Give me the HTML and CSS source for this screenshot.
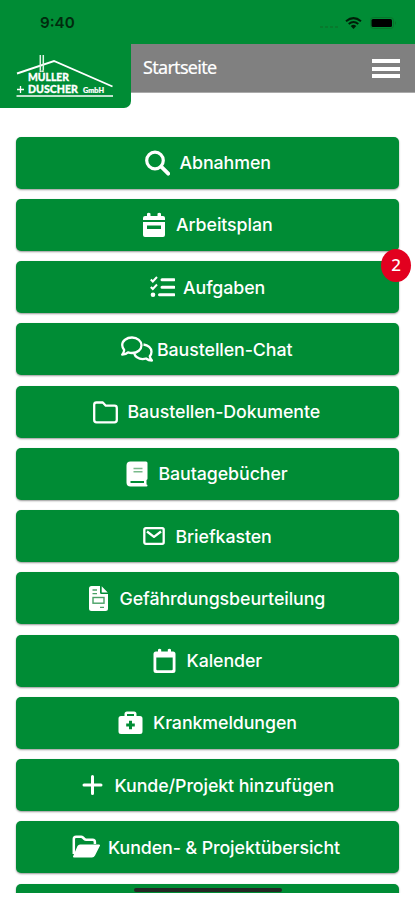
FILE: index.html
```html
<!DOCTYPE html>
<html lang="de">
<head>
<meta charset="utf-8">
<meta name="viewport" content="width=device-width, initial-scale=1">
<title>Startseite</title>
<link rel="stylesheet" href="styles.css">
</head>
<body>
<div class="screen">
  <div class="status">
    <span class="time">9:40</span>
    <div class="signals">
      <div class="dots"><i></i><i></i><i></i><i></i></div>
      <svg class="wifi" width="17" height="12" viewBox="0 0 17 12" fill="none" stroke="#001f08" stroke-width="2"><path d="M1 4.2Q8.500-2 16 4.200M3.700 7Q8.500 3 13.300 7"/><path d="M5.700 9Q8.500 6.700 11.300 9L8.500 12Z" fill="#001f08" stroke="none"/></svg>
      <svg width="27" height="13" viewBox="0 0 27 13"><rect x=".5" y=".5" width="23" height="11" rx="3" fill="none" stroke="#08752a"/><rect x="1.500" y="2" width="20.500" height="8" rx="1.500" fill="#000"/><path d="M25 4q2 2 0 4z" fill="#08752a"/></svg>
    </div>
  </div>
  <header class="header">
    <div class="logo">
      <svg width="131" height="64" viewBox="0 0 131 64">
        <path d="M17 29.500L54 17L112.500 42.500" fill="none" stroke="#fff" stroke-width="1.900"/>
        <path d="M40.300 11v15.500M43.300 11v15.500" stroke="#dff5e5" stroke-width="1.500"/>
        <path d="M16.500 52h96.500" stroke="#fff" stroke-width="1.500"/>
        <text class="logo-text" x="28" y="37.200" textLength="41" lengthAdjust="spacingAndGlyphs">MÜLLER</text>
        <text class="logo-text" x="28" y="49" textLength="50" lengthAdjust="spacingAndGlyphs">DUSCHER</text>
        <text class="logo-small" x="83" y="48.500" textLength="21" lengthAdjust="spacingAndGlyphs">GmbH</text>
        <path d="M17 45.500h7M20.500 42v7" stroke="#fff" stroke-width="1.300"/>
      </svg>
    </div>
    <div class="bar">
      <span class="title">Startseite</span>
      <div class="burger"><i></i><i></i><i></i></div>
    </div>
  </header>
  <main class="menu">
    <a class="item"><svg class="gap-m" width="25" height="26" viewBox="0 0 25 26" fill="none" stroke="#fff"><circle cx="10" cy="10.500" r="8.300" stroke-width="3.200"/><path d="M16.200 16.700l7 7" stroke-width="3.800" stroke-linecap="round"/></svg><span class="w-90">Abnahmen</span></a>
    <a class="item"><svg class="gap-m" width="24" height="26" viewBox="0 0 24 26"><path fill="#fff" fill-rule="evenodd" d="M5 1.500q1.800-1.500 3.500 0V4h7V1.500q1.800-1.500 3.500 0V4h2q2 0 2 2v2H1V6q0-2 2-2h2zM1 10h22v13q0 2-2 2H3q-2 0-2-2zM5 13.500v3.500h14v-3.500z"/></svg><span class="w-96">Arbeitsplan</span></a>
    <a class="item"><svg class="gap-s" width="25" height="24" viewBox="0 0 25 24" fill="none" stroke="#fff"><path d="M.8 4.500l2 2L7 2M.8 12l2 2L7 9.500" stroke-width="2"/><path d="M12 4.700h12M12 12.200h12M9.500 19.700h14.500" stroke-width="3" stroke-linecap="round"/><circle cx="3" cy="19.700" r="2.300" fill="#fff" stroke="none"/></svg><span class="w-81">Aufgaben</span><b class="badge">2</b></a>
    <a class="item"><svg class="gap-xs" width="32" height="26" viewBox="0 0 32 26" fill="none" stroke="#fff" stroke-width="2.300" stroke-linejoin="round"><path d="M11 1.500c5.500 0 9.500 3.500 9.500 7.800s-4 7.700-9.500 7.700q-2 0-4-.7Q4.500 18.700 1.200 18.700Q3 16.500 3.200 14Q1.200 11.500 1.200 9C1.200 5 5.500 1.500 11 1.500z"/><path d="M22.500 8.500c4.500.5 8 3.500 8 7.300q0 2.500-1.700 4.500q.4 2.300 2.200 4.200-3.500 0-6-2-5 1.500-9-1.200-2-1.400-2.700-3.500"/></svg><span class="w-136">Baustellen-Chat</span></a>
    <a class="item"><svg class="gap-m" width="25" height="24" viewBox="0 0 25 24" fill="none" stroke="#fff" stroke-width="2.300" stroke-linejoin="round"><path d="M3.500 2.500h6.300l3 3.200h8.700q2.300 0 2.300 2.300v12q0 2.300-2.300 2.300h-18q-2.300 0-2.300-2.300V4.800q0-2.300 2.300-2.300z"/></svg><span class="w-194">Baustellen-Dokumente</span></a>
    <a class="item"><svg class="gap-l" width="22" height="26" viewBox="0 0 22 26"><path fill="#fff" d="M4.500.5H20q1.500 0 1.500 1.500v15.500q0 1-1 1.500v4.500q1 0 1 1t-1 1h-16Q.5 25.500.5 21.500v-17q0-4 4-4z"/><path d="M7.500 7.500h9M7.500 10.800h9" stroke="#79ba8b" stroke-width="1.500"/><path d="M4.500 21h13.500" stroke="#008c35" stroke-width="2"/></svg><span class="w-130">Bautagebücher</span></a>
    <a class="item"><svg class="gap-l" width="22" height="18" viewBox="0 0 22 18" fill="none" stroke="#fff" stroke-width="2.300" stroke-linejoin="round"><rect x="1.300" y="1.200" width="19.400" height="15.600" rx="1.500"/><path d="M4 4.500l7 5.300 7-5.300"/></svg><span class="w-96">Briefkasten</span></a>
    <a class="item"><svg class="gap-xl" width="19" height="25" viewBox="0 0 19 25"><path fill="#fff" d="M2.500 0H11v6.500q0 1.500 1.500 1.500H19v14.500q0 2.500-2.500 2.500h-14Q0 25 0 22.500v-20Q0 0 2.500 0zM12.700.3L18.700 6.500h-6z"/><path d="M3.500 4h4.500M3.500 7.700h4.500M11 21.300h4" stroke="#48a065" stroke-width="1.300"/><rect x="4" y="11.500" width="11" height="5.700" fill="none" stroke="#48a065" stroke-width="1.400"/></svg><span class="w-206">Gefährdungsbeurteilung</span></a>
    <a class="item"><svg class="gap-l" width="23" height="26" viewBox="0 0 23 26"><path fill="#fff" fill-rule="evenodd" d="M5 1.500q1.600-1.500 3.200 0V3.500h6.600V1.500q1.600-1.500 3.200 0V3.500h2q2.500 0 2.500 2.500v16.500q0 2.500-2.500 2.500H3Q.5 25 .5 22.500V6Q.5 3.500 3 3.500h2zM3.300 9.500v11.700q0 1 1 1h14.400q1 0 1-1V9.500z"/></svg><span class="w-75">Kalender</span></a>
    <a class="item"><svg class="gap-m" width="25" height="24" viewBox="0 0 25 24"><path fill="#fff" fill-rule="evenodd" d="M6.500 5V3q0-2.500 2.500-2.500h7q2.500 0 2.500 2.500v2h3.500q2.500 0 2.500 2.500v13q0 2.500-2.500 2.500H3Q.5 23 .5 20.500v-13Q.5 5 3 5zM9 3v2h7V3z"/><path d="M12.500 9.700v8.600M8.200 14h8.600" stroke="#008c35" stroke-width="3"/></svg><span class="w-143">Krankmeldungen</span></a>
    <a class="item"><svg class="gap-xl" width="21" height="22" viewBox="0 0 21 22" fill="none" stroke="#fff" stroke-width="3" stroke-linecap="round"><path d="M10.500 2.500v17M2 11h17"/></svg><span class="w-218">Kunde/Projekt hinzufügen</span></a>
    <a class="item"><svg class="gap-s" width="28" height="24" viewBox="0 0 28 24"><path d="M1.800 19V4q0-2.300 2.300-2.300h5q1 0 1.800.8l1.500 1.500q.7.700 1.700.7h6.500q2.300 0 2.300 2.300v2" fill="none" stroke="#fff" stroke-width="2.500"/><path d="M8 9.500h19q1.500 0 .8 1.500l-4.800 9.500Q22 22.500 20 22.500H2q-1.500 0-.8-1.500L5.500 11Q6.300 9.500 8 9.500z" fill="#fff"/></svg><span class="w-234">Kunden- &amp; Projektübersicht</span></a>
    <a class="item"></a>
  </main>
  <div class="home"><i></i></div>
</div>
</body>
</html>
```
FILE: styles.css
```css
* { box-sizing: border-box; }
body { margin: 0; background: #fff; font-family: Inter, sans-serif; }
i { display: block; }
.screen { position: relative; width: 415px; height: 900px; overflow: hidden; }
.status { display: flex; justify-content: space-between; height: 44px; padding: 0 18px 0 40px; background: #008c35; }
.time { padding-top: 13px; font-size: 15.2px; line-height: 20px; font-weight: 600; color: #002b0e; }
.signals { display: flex; align-items: flex-start; padding-top: 17px; }
.wifi { margin: 0 8px 0 7px; }
.dots { display: flex; gap: 2px; padding-top: 9px; }
.dots i { width: 3px; height: 2px; background: #087a2d; }
.header { display: flex; align-items: flex-start; height: 64px; }
.logo { width: 131px; height: 64px; background: #008c35; border-radius: 0 0 7px 0; }
.logo svg { display: block; }
.logo-text { font: 900 11.5px Lato, sans-serif; fill: #fff; stroke: #fff; stroke-width: .3px; }
.logo-small { font: 900 6.5px Lato, sans-serif; fill: #fff; stroke: #fff; stroke-width: .2px; }
.bar { flex: 1; height: 49px; display: flex; justify-content: space-between; padding: 0 15px 0 12px; background: #808080; border-bottom: 1px solid #aaa; }
.title { padding-top: 11px; font: 18px/24px "Noto Sans", sans-serif; letter-spacing: -.7px; color: #fff; -webkit-text-stroke: .2px #fff; }
.burger { display: flex; flex-direction: column; gap: 3.5px; padding-top: 15px; }
.burger i { width: 28px; height: 4px; background: #fff; }
.menu { display: flex; flex-direction: column; gap: 10.27px; height: 785px; margin: 0 16px; padding-top: 28.5px; overflow: visible; }
.item { position: relative; flex: 0 0 52px; display: flex; align-items: center; justify-content: center; padding-right: 1px; border-radius: 5px; background: #008c35; box-shadow: 0 1px 2px rgba(0, 0, 0, .4); color: #fff; font-size: 17.8px; line-height: 24px; font-weight: 500; letter-spacing: -.08px; white-space: nowrap; }
.item span { padding-top: 1px; }
.item svg { flex: none; }
.gap-xs { margin-right: 4px; }
.gap-s { margin-right: 8px; }
.gap-m { margin-right: 10px; }
.gap-l { margin-right: 11px; }
.gap-xl { margin-right: 12px; }
.w-75 { width: 75px; }
.w-81 { width: 81px; }
.w-90 { width: 90px; }
.w-96 { width: 96px; }
.w-130 { width: 130px; }
.w-136 { width: 136px; }
.w-143 { width: 143px; }
.w-194 { width: 194px; }
.w-206 { width: 206px; }
.w-218 { width: 218px; }
.w-234 { width: 234px; }
.badge { position: absolute; right: -12px; top: -12px; width: 30px; height: 33px; border-radius: 50%; background: #e2001f; font: 500 17px/32px "Noto Sans", sans-serif; text-align: center; }
.home { position: absolute; left: 0; right: 0; top: 893px; height: 7px; background: #fff; }
.home i { position: absolute; left: 134px; top: -5px; width: 148px; height: 4px; border-radius: 2px; background: #242824; }
```
